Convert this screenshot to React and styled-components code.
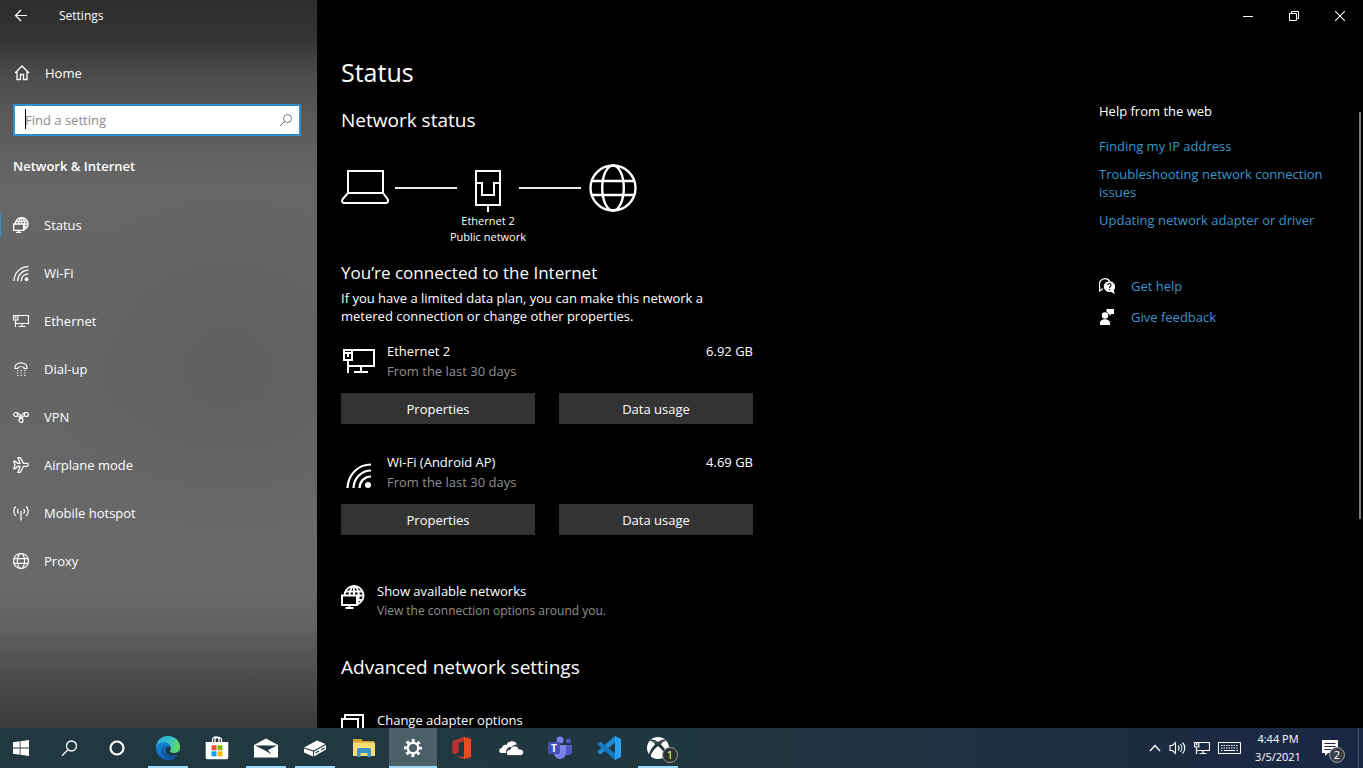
import React from "react";
import styled, { createGlobalStyle } from "styled-components";

const GlobalStyle = createGlobalStyle`
  *, *::before, *::after { box-sizing: border-box; }
  body {
    margin: 0;
    background: #000;
    color: #fff;
    font-family: "Open Sans", "Noto Sans", sans-serif;
    font-size: 13px;
    line-height: 18px;
    overflow: hidden;
  }
  h1, h2, h3, p, ul { margin: 0; padding: 0; font-weight: 400; }
  ul { list-style: none; }
  a { text-decoration: none; color: inherit; }
  button { font: inherit; color: inherit; border: 0; padding: 0; background: none; }
  svg { display: block; flex: none; }
`;

/* ---------- layout ---------- */

const Desktop = styled.div`
  display: grid;
  grid-template-rows: minmax(0, 1fr) 40px;
  height: 100vh;
`;

const Window = styled.div`
  display: grid;
  grid-template-columns: 317px minmax(0, 1fr);
  overflow: hidden;
`;

const Sidebar = styled.aside`
  background:
    radial-gradient(ellipse 180px 170px at 72% 50%, rgba(80, 78, 77, 0.25), rgba(80, 78, 77, 0)),
    linear-gradient(
      180deg,
      #2d2d2d 0%,
      #333333 5%,
      #4a4a4a 10%,
      #5a5a5a 16%,
      #666666 25%,
      #656565 55%,
      #6a6a6a 80%,
      #626262 86%,
      #4c4c4c 93%,
      #3a3a3a 100%
    );
  padding-right: 16px;
`;

const SideTitle = styled.header`
  display: flex;
  align-items: center;
  height: 32px;
  padding-left: 14px;
  gap: 30px;
  font-size: 12px;
  line-height: 32px;
`;

const IconButton = styled.button`
  display: flex;
  align-items: center;
  justify-content: center;
`;

const HomeLink = styled.a`
  display: flex;
  align-items: center;
  gap: 15px;
  height: 50px;
  margin-top: 16px;
  padding-left: 14px;
`;

const SearchBox = styled.label`
  position: relative;
  display: flex;
  align-items: center;
  height: 32px;
  margin: 6px 0 0 13px;
  padding: 0 6px 0 10px;
  background: #fff;
  border: 2px solid #2f93c6;
`;

const SearchInput = styled.input`
  flex: 1;
  min-width: 0;
  padding: 0;
  border: 0;
  outline: 0;
  background: none;
  color: #000;
  font: inherit;
  &::placeholder { color: #8c8c8c; opacity: 1; }
`;

const Caret = styled.span`
  position: absolute;
  left: 10px;
  top: 3px;
  width: 1px;
  height: 20px;
  background: #000;
`;

const SideHeading = styled.h2`
  height: 60px;
  margin-bottom: 5px;
  padding-left: 13px;
  font-size: 13px;
  font-weight: 600;
  line-height: 60px;
`;

const NavItem = styled.a`
  display: flex;
  align-items: center;
  gap: 15px;
  height: 48px;
  padding-left: 13px;
  background: ${(p) => (p.$active ? "linear-gradient(#2f93c6, #2f93c6) left center / 1px 24px no-repeat" : "none")};
`;

const Main = styled.main`
  display: flex;
  flex-direction: column;
  min-height: 0;
  background: #000;
`;

const Caption = styled.div`
  display: flex;
  justify-content: flex-end;
  height: 32px;
  flex: none;
`;

const CaptionButton = styled(IconButton)`
  width: 46px;
`;

const Columns = styled.div`
  display: flex;
  flex: 1;
  min-height: 0;
`;

const Content = styled.section`
  flex: 1;
  min-width: 0;
  padding: 20px 24px 0 24px;
`;

const PageTitle = styled.h1`
  font-size: 25px;
  line-height: 40px;
`;

const SectionTitle = styled.h2`
  font-size: 19px;
  line-height: 28px;
`;

const StatusTitle = styled(SectionTitle)`
  margin-top: 14px;
`;

const Diagram = styled.figure`
  display: grid;
  grid-template-columns: 54px 62px 62px 62px 56px;
  align-items: center;
  margin: 30px 0 0;
`;

const Wire = styled.span`
  height: 2px;
  background: #e8e8e8;
`;

const Node = styled.span`
  display: flex;
  height: 48px;
  align-items: ${(p) => p.$valign || "center"};
  justify-content: ${(p) => p.$align || "flex-start"};
`;

const NodeLabel = styled.figcaption`
  grid-column: 2 / 5;
  padding-top: 1px;
  text-align: center;
  font-size: 11px;
  line-height: 16px;
`;

const ConnectedTitle = styled.h3`
  margin-top: 16px;
  font-size: 17px;
  line-height: 24px;
`;

const Note = styled.p`
  max-width: 390px;
  margin-top: 4px;
`;

const Adapter = styled.article`
  width: 412px;
  margin-top: ${(p) => (p.$first ? "16px" : "28px")};
`;

const AdapterInfo = styled.div`
  display: grid;
  grid-template-columns: 46px 1fr auto;
  line-height: 20px;
`;

const AdapterIcon = styled.span`
  display: flex;
  align-items: ${(p) => (p.$low ? "flex-end" : "center")};
  height: ${(p) => (p.$low ? "36px" : "38px")};
  padding-left: ${(p) => (p.$low ? "5px" : "2px")};
`;

const Muted = styled.p`
  color: #909090;
`;

const SmallMuted = styled(Muted)`
  font-size: 12px;
`;

const ButtonRow = styled.div`
  display: grid;
  grid-template-columns: 1fr 1fr;
  gap: 24px;
  margin-top: 12px;
`;

const ActionButton = styled.button`
  height: 31px;
  background: #333;
`;

const OptionLink = styled.a`
  display: flex;
  gap: 13px;
  margin-top: ${(p) => (p.$spaced ? "30px" : "47px")};
  line-height: 19px;
`;

const OptionIcon = styled.span`
  width: 23px;
  padding-top: 3px;
`;

const AdvancedTitle = styled(SectionTitle)`
  margin-top: 33px;
`;

const HelpPane = styled.aside`
  width: 260px;
  padding: 70px 16px 0 0;
`;

const HelpTitle = styled.h2`
  font-size: 13px;
  line-height: 18px;
`;

const HelpLinks = styled.ul`
  display: flex;
  flex-direction: column;
  gap: 10px;
  margin-top: 17px;
  color: #3a96cb;
`;

const SupportLinks = styled.div`
  display: flex;
  flex-direction: column;
  gap: 13px;
  margin-top: 48px;
`;

const SupportLink = styled.a`
  display: flex;
  align-items: center;
  gap: 16px;
  color: #3a96cb;
  svg { color: #fff; }
`;

const ScrollTrack = styled.div`
  width: 4px;
  padding-top: 80px;
`;

const ScrollThumb = styled.div`
  width: 2px;
  height: 66%;
  background: #7a7a7a;
`;

/* ---------- taskbar ---------- */

const Taskbar = styled.footer`
  display: flex;
  justify-content: space-between;
  background: linear-gradient(90deg, #213840 0%, #21373f 50%, #1d2e42 75%, #1a2742 100%);
`;

const TaskGroup = styled.div`
  display: flex;
`;

const Apps = styled.div`
  display: flex;
  gap: 1px;
  margin-left: 3px;
`;

const SystemButton = styled(IconButton)`
  width: ${(p) => (p.$start ? "45px" : "48px")};
  padding-right: ${(p) => (p.$start ? "3px" : "0")};
`;

const AppButton = styled(IconButton)`
  position: relative;
  width: 48px;
  background: ${(p) => (p.$active ? "#4a5f66" : "none")};
  &::after {
    content: "";
    display: ${(p) => (p.$running ? "block" : "none")};
    position: absolute;
    bottom: 0;
    left: ${(p) => (p.$active ? "0" : "4px")};
    right: ${(p) => (p.$active ? "0" : "4px")};
    height: 2px;
    background: #9bd8f8;
  }
`;

const Badge = styled.span`
  position: absolute;
  left: 28px;
  top: 19px;
  width: 16px;
  height: 16px;
  border: 1px solid #9a9a9a;
  border-radius: 50%;
  background: #2b2f31;
  font-size: 11px;
  line-height: 14px;
  text-align: center;
`;

const Tray = styled.div`
  display: flex;
  align-items: center;
`;

const TrayIcons = styled.div`
  display: flex;
  align-items: center;
  gap: 8px;
`;

const Clock = styled.time`
  width: 74px;
  text-align: center;
  font-size: 11px;
  line-height: 18px;
`;

const NoticeButton = styled(IconButton)`
  position: relative;
  width: 44px;
  height: 40px;
  padding-left: 7px;
  border-right: 1px solid #4a566b;
  justify-content: flex-start;
`;

const NoticeBadge = styled(Badge)`
  left: 14px;
  background: #3a3f48;
`;

const ShowDesktop = styled.button`
  width: 4px;
  height: 40px;
`;

/* ---------- icons ---------- */

const Line = ({ w = 16, h = 16, box, sw = 1, children }) => (
  <svg
    width={w}
    height={h}
    viewBox={box || `0 0 ${w} ${h}`}
    fill="none"
    stroke="currentColor"
    strokeWidth={sw}
    aria-hidden="true"
  >
    {children}
  </svg>
);

const BackIcon = () => (
  <Line w={15} h={14} sw={1.2}>
    <path d="M13 6.500H1.500M7 1L1.500 6.500L7 12" />
  </Line>
);

const HomeIcon = () => (
  <Line w={16} h={16} sw={1.3}>
    <path d="M1 8L8 1L15 8M3 6.500V14.500H6.500V9.500H9.500V14.500H13V6.500" />
  </Line>
);

const FindIcon = () => (
  <Line w={14} h={14} sw={1}>
    <g stroke="#777">
      <circle cx="8.500" cy="5.500" r="4" />
      <path d="M5.500 8.500L1 13" />
    </g>
  </Line>
);

const StatusIcon = ({ size = 16, sw = 1.9 }) => (
  <Line w={size} h={size} box="0 0 24 24" sw={sw}>
    <path d="M3.500 11A9.500 9.500 0 1 1 16.500 19.300" />
    <path d="M8.500 11C8.500 6 10 3 12 1.200M14 1.200C16.500 3 17.800 6.500 17.800 11C17.800 14 17.300 16.500 16 19" />
    <path d="M13 1.200V10M4.500 6.500H21.500M16 10.500H22.500M16 15H21.500" />
    <path d="M1 10.500H16V20H1ZM8.500 20V23M4.500 23H12.500" />
  </Line>
);

const WifiIcon = ({ size = 16, sw = 2 }) => (
  <Line w={size} h={size} box="0 0 26 26" sw={sw}>
    <path d="M1.500 26C2 12.500 12 2.500 25 2.500M7.500 26C8 16 15.500 8.500 25 8.500M13.500 26C14 19 18.500 14.500 25 14.500" />
    <circle cx="22" cy="23" r="3" fill="currentColor" stroke="none" />
  </Line>
);

const MonitorIcon = () => (
  <Line w={32} h={25} sw={2}>
    <path d="M9 2H31V18H9M18 18V24M11 24H25M5 13V25" />
    <path d="M1 2H9V12H1ZM1 5H9" />
    <path d="M4 6H6V9H4Z" fill="currentColor" stroke="none" />
    <path d="M5 18H10" />
  </Line>
);

const SmallMonitorIcon = () => (
  <Line w={16} h={14} sw={1.2}>
    <path d="M5 1.500H15.500V9.500H2.500M9 9.500V12.500M5.500 12.500H12.500M2.500 6.500V13" />
    <path d="M.600 1.500H4.800V6H.600ZM2.700 2V4.500" />
  </Line>
);

const DialIcon = () => (
  <Line w={16} h={16} sw={1.2}>
    <path d="M5 6.500C6.500 5.500 9.500 5.500 11 6.500V7.500H14C14.800 4 11.500 1.800 8 1.800C4.500 1.800 1.200 4 2 7.500H5Z" />
    <path d="M4 9.500H12.500M4 12H12.500M4 14.500H12.500" strokeDasharray="1.300 2.300" />
  </Line>
);

const VpnIcon = () => (
  <Line w={16} h={16} sw={1.2}>
    <circle cx="2.700" cy="5.500" r="2" />
    <circle cx="13.300" cy="5.500" r="2" />
    <circle cx="8" cy="11.500" r="2" />
    <path d="M3 3.500C5.500 3.300 6.500 5 7.500 6.500L10 10.500M13 3.500C10.500 3.300 9.500 5 8.500 6.500L6 10.500M4.300 6.800C5.800 6.500 6.300 8 7 9M11.700 6.800C10.200 6.500 9.700 8 9 9" />
  </Line>
);

const PlaneIcon = () => (
  <Line w={16} h={16} sw={1.3}>
    <path d="M.800 4.500H2.500L4.500 6.300H7L5 .700H7.300L10.500 6.300H14C15.700 6.300 15.700 9.300 14 9.300H10.500L7.300 15.300H5L7 9.300H4.500L2.500 11.500H.800L2 7.900Z" />
  </Line>
);

const HotspotIcon = () => (
  <Line w={16} h={16} sw={1.2}>
    <path d="M8 6V15.500M5.500 3.800C4.300 5.200 4.300 7.200 5.500 8.600M10.500 3.800C11.700 5.200 11.700 7.200 10.500 8.600M2.800 1.500C.200 4.200 .200 8.300 2.800 11M13.200 1.500C15.800 4.200 15.800 8.300 13.200 11" />
  </Line>
);

const GlobeIcon = ({ size = 16, sw = 3.5 }) => (
  <Line w={size} h={size} box="0 0 48 48" sw={sw}>
    <circle cx="24" cy="24" r="22.500" />
    <ellipse cx="24" cy="24" rx="10.800" ry="22.500" />
    <path d="M2 17H46M2 31H46" />
  </Line>
);

const LaptopIcon = () => (
  <Line w={48} h={38} sw={2}>
    <path d="M7 24V2H42V24M7 24H42L46.500 30C47.500 32 47 34 45 34H3C1 34 .700 32 1.700 30Z" />
  </Line>
);

const PortIcon = () => (
  <Line w={26} h={42} sw={2}>
    <path d="M1 1H25V35H1ZM13 36V42M1 13H7V25H19V13H25" />
  </Line>
);

const WindowsStackIcon = () => (
  <Line w={23} h={20} sw={2}>
    <path d="M1 5H17V19H1ZM4 5V1H22V15H18" />
  </Line>
);

const HelpIcon = () => (
  <svg width="16" height="16" viewBox="0 0 16 16" aria-hidden="true">
    <path d="M4 11H3L.700 13V9C-.800 4.500 2 .700 6 .700C8.500 .700 10 2 11 3.500" fill="none" stroke="#fff" strokeWidth="1.200" />
    <path d="M10.300 3.300A5.300 5.300 0 1 0 11.500 13.700L15.800 16L14.800 12A5.300 5.300 0 0 0 10.300 3.300Z" fill="#fff" />
    <path d="M8.700 7.200C8.700 5 12 5 12 7.200C12 8.500 10.400 8.600 10.400 10M10.400 11V12.200" fill="none" stroke="#000" strokeWidth="1.100" />
  </svg>
);

const FeedbackIcon = () => (
  <svg width="16" height="16" viewBox="0 0 16 16" fill="#fff" aria-hidden="true">
    <circle cx="6" cy="6.500" r="3.200" />
    <path d="M1 16V14C1 9 11 9 11 14V16ZM7.500 0H15V5H12.500L10.500 7V5H9.500C9.300 4 8.500 3.200 7.500 2.700Z" />
  </svg>
);

const StartIcon = () => (
  <svg width="16" height="16" viewBox="0 0 16 16" fill="#fff" aria-hidden="true">
    <path d="M0 2.300L6.700 1.300V7.500H0ZM7.500 1.200L16 0V7.500H7.500ZM0 8.400H6.700V14.700L0 13.700ZM7.500 8.400H16V16L7.500 14.800Z" />
  </svg>
);

const TaskSearchIcon = () => (
  <Line w={17} h={17} sw={1.3}>
    <circle cx="10.500" cy="6" r="5" />
    <path d="M7 9.700L1 15.800" />
  </Line>
);

const CortanaIcon = () => (
  <Line w={16} h={16} sw={2.2}>
    <circle cx="8" cy="8" r="6.500" />
  </Line>
);

const EdgeIcon = () => (
  <svg width="24" height="24" viewBox="0 0 24 24" aria-hidden="true">
    <defs>
      <linearGradient id="edgeTop" x1="0" y1="0.3" x2="1" y2="0.5">
        <stop offset="0" stopColor="#2aa8dc" />
        <stop offset="0.55" stopColor="#35c3c9" />
        <stop offset="1" stopColor="#65dd52" />
      </linearGradient>
      <linearGradient id="edgeLow" x1="0" y1="0" x2="0.8" y2="1">
        <stop offset="0" stopColor="#1a93e0" />
        <stop offset="1" stopColor="#0c53a8" />
      </linearGradient>
    </defs>
    <circle cx="12" cy="12" r="12" fill="url(#edgeLow)" />
    <path d="M.200 10.500C1 4 6 0 12 0C19 0 24 5 24 11C24 15 21 17 18 17C15 17 13.500 16 13.800 15C14.500 14 15 13 15 12C15 9 12 6.500 8.500 6.500C4.500 6.500 1 8.500 .200 10.500Z" fill="url(#edgeTop)" />
    <path d="M8.500 10C6 14 8 20.500 13 22C9 21.500 5.500 18 6 14C6.200 12.300 7 11 8.500 10Z" fill="#0e4c96" />
    <path d="M9.500 13C9.500 17.500 14 20.500 19.500 18.800L22.300 17.500C21.500 19 20 20.700 18 21.500C12 23 7.500 18 9.500 13Z" fill="#164f86" />
    <path d="M13.800 15C13.500 16 15 17.100 18 17.100C20 17.100 21.500 16.500 22.600 15.500L24 20L19.500 18.800C14 20.500 9.500 17.500 9.500 13C10 11 12 10 13.500 10.500C15 11 15 14 13.800 15Z" fill="#21383f" />
  </svg>
);

const StoreIcon = () => (
  <svg width="24" height="24" viewBox="0 0 24 24" aria-hidden="true">
    <path d="M7.500 6V4C7.500 0 14 0 14 4V6M10 6V3.500C10 .500 16.500 .500 16.500 4V6" fill="none" stroke="#fff" strokeWidth="1.300" />
    <path d="M.700 6H23.300V21C23.300 22.500 22.500 23.300 21 23.300H3C1.500 23.300 .700 22.500 .700 21Z" fill="#fff" />
    <path d="M6.500 9.300h5v5h-5z" fill="#f25022" />
    <path d="M12.500 9.300h5v5h-5z" fill="#7fba00" />
    <path d="M6.500 15.300h5v5h-5z" fill="#00a4ef" />
    <path d="M12.500 15.300h5v5h-5z" fill="#ffb900" />
  </svg>
);

const MailIcon = () => (
  <svg width="24" height="20" viewBox="0 0 24 20" aria-hidden="true">
    <path d="M0 7L12 .500L24 7V19.500H0Z" fill="#fff" />
    <path d="M1 7.500H23L14 12L17.500 16.500L11.500 12.800Z" fill="#21373f" />
  </svg>
);

const DriveIcon = () => (
  <svg width="22" height="17" viewBox="0 0 22 17" aria-hidden="true">
    <path d="M0 7.500L13 .500L21.500 4L9.500 10.500Z" fill="#fff" />
    <path d="M0 8.500L9 11.500V16.500L0 12.500ZM10 11.500L22 5V9.500L10 16.500Z" fill="#fff" />
    <path d="M11.500 13L15 11M17 10L20.500 8" stroke="#21373f" strokeWidth="1.200" />
  </svg>
);

const FolderIcon = () => (
  <svg width="22" height="18" viewBox="0 0 22 18" aria-hidden="true">
    <path d="M0 0H8L10 2H21V8H0Z" fill="#d9a32c" />
    <path d="M0 3.500H22V17H0Z" fill="#fbdc75" />
    <path d="M4 18V11C4 9.500 5 9 6 9H16C17 9 18 9.500 18 11V18H14.500V14H7.500V18Z" fill="#3b92c7" />
  </svg>
);

const GearIcon = () => (
  <svg width="20" height="20" viewBox="0 0 20 20" aria-hidden="true">
    <g fill="none" stroke="#fff">
      <circle cx="10" cy="10" r="5.300" strokeWidth="2.400" />
      <circle cx="10" cy="10" r="7.600" strokeWidth="2.800" strokeDasharray="2.985 2.984" strokeDashoffset="1.490" />
    </g>
  </svg>
);

const OfficeIcon = () => (
  <svg width="20" height="22" viewBox="0 0 20 22" aria-hidden="true">
    <path d="M12 0L19 2V20L12 22L4 19.500L13 20V4L6.500 5.500V15L2.500 17.500C1 17 .500 16 .500 14.500V6C.500 4.500 1 4 2.500 3.500Z" fill="#c73a28" />
    <path d="M12 0L19 2V20L12 22Z" fill="#eb4b22" />
    <path d="M12 0V4.300L6.500 6V15L2.500 17.500C1 17 .500 16 .500 14.500V6C.500 4.500 1 4 2.500 3.500Z" fill="#b8322f" />
  </svg>
);

const CloudIcon = () => (
  <svg width="25" height="16" viewBox="0 0 25 16" aria-hidden="true">
    <path d="M2 13C-.800 12 0 8 3 8C3.200 5.500 5.500 4 7.500 5C9 .500 16 -.500 18 4.500C15.500 4 13.800 5.500 13 7C8.500 6.500 6.500 9.500 7.500 13Z" fill="#fff" />
    <path d="M9 15.500C6.500 14.500 7 9.500 11 9.500C12 5 18.500 4.500 19.800 9C25.500 8.500 26 15 21.500 15.500Z" fill="#fff" stroke="#21373f" strokeWidth=".8" />
  </svg>
);

const TeamsT = styled.text`
  font: 700 10px "Open Sans", sans-serif;
  fill: #fff;
`;

const TeamsIcon = () => (
  <svg width="26" height="24" viewBox="0 0 26 24" aria-hidden="true">
    <circle cx="13" cy="4" r="3.500" fill="#7b83eb" />
    <circle cx="21.500" cy="5" r="2.500" fill="#5059c9" />
    <path d="M17 9H25V15.500C25 18.500 22 20 19 19Z" fill="#5059c9" />
    <path d="M8 9H19V16.500C19 25 7 25 7 16.500Z" fill="#7b83eb" />
    <rect x="1" y="6" width="12" height="12" rx="1" fill="#4650b8" />
    <TeamsT x="4" y="15.500">T</TeamsT>
  </svg>
);

const CodeIcon = () => (
  <svg width="25" height="24" viewBox="0 0 25 24" aria-hidden="true">
    <path d="M18 0L24 3V21L18 24Z" fill="#2b9ff0" />
    <path d="M18 0V6.500L3.500 18.500L.500 16.500V15.500Z" fill="#1f8cd8" />
    <path d="M18 24V17.500L3.500 5.500L.500 7.500V8.500Z" fill="#1479bf" />
  </svg>
);

const XboxIcon = () => (
  <svg width="22" height="22" viewBox="0 0 22 22" aria-hidden="true">
    <circle cx="11" cy="11" r="11" fill="#fff" />
    <path d="M3.500 3.500C6 3 9 4.300 11 5.800C13 4.300 16 3 18.500 3.500" fill="none" stroke="#21373f" strokeWidth="1.600" />
    <path d="M11 9C7 12.500 4 16 4 19L3 20L1.800 18C2.500 14 5.500 10 8.200 7.300L5 4L11 6.600L17 4L13.800 7.300C16.500 10 19.500 14 20.200 18L19 20L18 19C18 16 15 12.500 11 9Z" fill="#21373f" />
  </svg>
);

const ChevronIcon = () => (
  <Line w={12} h={8} sw={1.3}>
    <path d="M1 7L6 1.500L11 7" />
  </Line>
);

const VolumeIcon = () => (
  <Line w={17} h={16} sw={1.1}>
    <path d="M1 5.500H3.500L6.500 2.500V13.500L3.500 10.500H1ZM9 5.500C10.300 7 10.300 9 9 10.500M11.300 4C13.300 6.300 13.300 9.700 11.300 12M13.500 2.500C16.500 5.500 16.500 10.500 13.500 13.500" />
  </Line>
);

const KeyboardIcon = () => (
  <Line w={23} h={14} sw={1}>
    <path d="M.500 1.500H22.500V12.500H.500Z" />
    <path d="M3 4.500H20M3 7H20" strokeDasharray="1.500 1" />
    <path d="M3 9.500H4.500M6 9.500H17M18.500 9.500H20" />
  </Line>
);

const NoticeIcon = () => (
  <svg width="16" height="17" viewBox="0 0 16 17" aria-hidden="true">
    <path d="M0 0H16V13H6L3 16V13H0Z" fill="#fff" />
    <path d="M2.500 3.500H13.500M2.500 6.500H13.500M2.500 9.500H9" stroke="#1a2742" strokeWidth="1" />
  </svg>
);

const MinimizeIcon = () => (
  <Line w={10} h={10}>
    <path d="M0 5.500H10" />
  </Line>
);

const RestoreIcon = () => (
  <Line w={10} h={10}>
    <path d="M.500 2.500H7.500V9.500H.500ZM2.500 2.500V.500H9.500V7.500H7.500" />
  </Line>
);

const CloseIcon = () => (
  <Line w={10} h={10} sw={1.1}>
    <path d="M0 0L10 10M10 0L0 10" />
  </Line>
);

/* ---------- data ---------- */

const navItems = [
  { label: "Status", icon: <StatusIcon />, active: true },
  { label: "Wi-Fi", icon: <WifiIcon /> },
  { label: "Ethernet", icon: <SmallMonitorIcon /> },
  { label: "Dial-up", icon: <DialIcon /> },
  { label: "VPN", icon: <VpnIcon /> },
  { label: "Airplane mode", icon: <PlaneIcon /> },
  { label: "Mobile hotspot", icon: <HotspotIcon /> },
  { label: "Proxy", icon: <GlobeIcon /> },
];

const adapters = [
  { name: "Ethernet 2", usage: "6.92 GB", icon: <MonitorIcon /> },
  { name: "Wi-Fi (Android AP)", usage: "4.69 GB", icon: <WifiIcon size={26} sw={2.2} />, low: true },
];

const helpLinks = [
  "Finding my IP address",
  "Troubleshooting network connection issues",
  "Updating network adapter or driver",
];

const apps = [
  { name: "Microsoft Edge", icon: <EdgeIcon />, running: true },
  { name: "Microsoft Store", icon: <StoreIcon /> },
  { name: "Mail", icon: <MailIcon />, running: true },
  { name: "Drive", icon: <DriveIcon />, running: true },
  { name: "File Explorer", icon: <FolderIcon /> },
  { name: "Settings", icon: <GearIcon />, running: true, active: true },
  { name: "Office", icon: <OfficeIcon /> },
  { name: "OneDrive", icon: <CloudIcon /> },
  { name: "Teams", icon: <TeamsIcon /> },
  { name: "Visual Studio Code", icon: <CodeIcon /> },
  { name: "Xbox", icon: <XboxIcon />, running: true, badge: 1 },
];

export default function App() {
  return (
    <>
      <GlobalStyle />
      <Desktop>
        <Window>
          <Sidebar>
            <SideTitle>
              <IconButton aria-label="Back"><BackIcon /></IconButton>
              Settings
            </SideTitle>
            <HomeLink href="#home"><HomeIcon />Home</HomeLink>
            <SearchBox>
              <Caret />
              <SearchInput type="text" placeholder="Find a setting" aria-label="Find a setting" />
              <FindIcon />
            </SearchBox>
            <SideHeading>Network &amp; Internet</SideHeading>
            <nav>
              {navItems.map((item) => (
                <NavItem key={item.label} href="#nav" $active={item.active}>
                  {item.icon}
                  {item.label}
                </NavItem>
              ))}
            </nav>
          </Sidebar>
          <Main>
            <Caption>
              <CaptionButton aria-label="Minimize"><MinimizeIcon /></CaptionButton>
              <CaptionButton aria-label="Restore"><RestoreIcon /></CaptionButton>
              <CaptionButton aria-label="Close"><CloseIcon /></CaptionButton>
            </Caption>
            <Columns>
              <Content>
                <PageTitle>Status</PageTitle>
                <StatusTitle>Network status</StatusTitle>
                <Diagram>
                  <Node><LaptopIcon /></Node>
                  <Wire />
                  <Node $align="center" $valign="flex-end"><PortIcon /></Node>
                  <Wire />
                  <Node $align="flex-end"><GlobeIcon size={48} sw={2.4} /></Node>
                  <NodeLabel>Ethernet 2<br />Public network</NodeLabel>
                </Diagram>
                <ConnectedTitle>You’re connected to the Internet</ConnectedTitle>
                <Note>
                  If you have a limited data plan, you can make this network a metered connection or
                  change other properties.
                </Note>
                {adapters.map((a, i) => (
                  <Adapter key={a.name} $first={i === 0}>
                    <AdapterInfo>
                      <AdapterIcon $low={a.low}>{a.icon}</AdapterIcon>
                      <div>
                        <p>{a.name}</p>
                        <Muted>From the last 30 days</Muted>
                      </div>
                      <p>{a.usage}</p>
                    </AdapterInfo>
                    <ButtonRow>
                      <ActionButton>Properties</ActionButton>
                      <ActionButton>Data usage</ActionButton>
                    </ButtonRow>
                  </Adapter>
                ))}
                <OptionLink href="#networks">
                  <OptionIcon><StatusIcon size={24} /></OptionIcon>
                  <div>
                    <p>Show available networks</p>
                    <SmallMuted>View the connection options around you.</SmallMuted>
                  </div>
                </OptionLink>
                <AdvancedTitle>Advanced network settings</AdvancedTitle>
                <OptionLink href="#adapters" $spaced>
                  <OptionIcon><WindowsStackIcon /></OptionIcon>
                  <p>Change adapter options</p>
                </OptionLink>
              </Content>
              <HelpPane>
                <HelpTitle>Help from the web</HelpTitle>
                <HelpLinks>
                  {helpLinks.map((text) => (
                    <li key={text}><a href="#help">{text}</a></li>
                  ))}
                </HelpLinks>
                <SupportLinks>
                  <SupportLink href="#get-help"><HelpIcon />Get help</SupportLink>
                  <SupportLink href="#feedback"><FeedbackIcon />Give feedback</SupportLink>
                </SupportLinks>
              </HelpPane>
              <ScrollTrack><ScrollThumb /></ScrollTrack>
            </Columns>
          </Main>
        </Window>
        <Taskbar>
          <TaskGroup>
            <SystemButton $start aria-label="Start"><StartIcon /></SystemButton>
            <SystemButton aria-label="Search"><TaskSearchIcon /></SystemButton>
            <SystemButton aria-label="Cortana"><CortanaIcon /></SystemButton>
            <Apps>
              {apps.map((app) => (
                <AppButton key={app.name} aria-label={app.name} $running={app.running} $active={app.active}>
                  {app.icon}
                  {app.badge && <Badge>{app.badge}</Badge>}
                </AppButton>
              ))}
            </Apps>
          </TaskGroup>
          <Tray>
            <TrayIcons>
              <IconButton aria-label="Show hidden icons"><ChevronIcon /></IconButton>
              <IconButton aria-label="Volume"><VolumeIcon /></IconButton>
              <IconButton aria-label="Network"><SmallMonitorIcon /></IconButton>
              <IconButton aria-label="Touch keyboard"><KeyboardIcon /></IconButton>
            </TrayIcons>
            <Clock>4:44 PM<br />3/5/2021</Clock>
            <NoticeButton aria-label="Notifications">
              <NoticeIcon />
              <NoticeBadge>2</NoticeBadge>
            </NoticeButton>
            <ShowDesktop aria-label="Show desktop" />
          </Tray>
        </Taskbar>
      </Desktop>
    </>
  );
}
